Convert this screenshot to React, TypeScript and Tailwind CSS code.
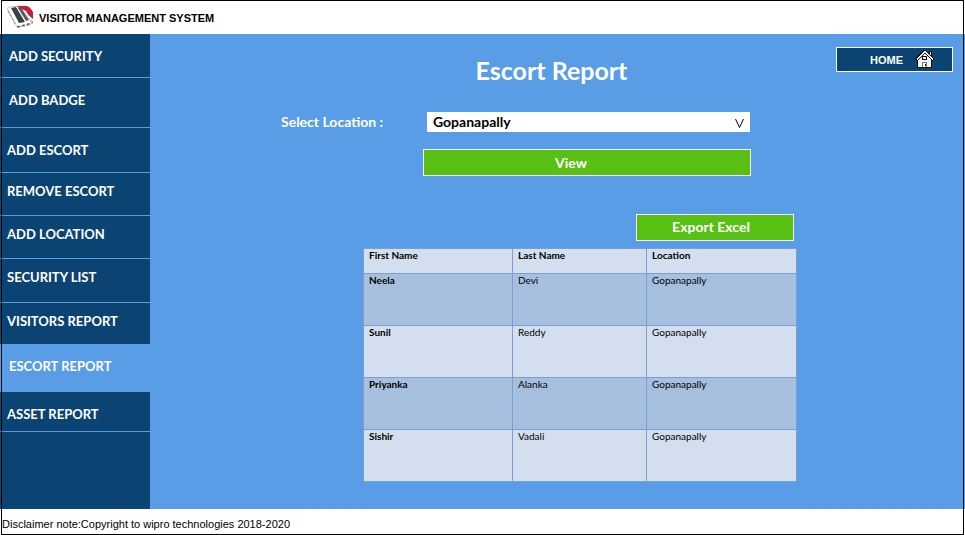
import React from "react";

type NavItem = { label: string; className: string };

const navItems: NavItem[] = [
  { label: "ADD SECURITY", className: "h-11 pt-3 pl-[9px] border-b" },
  { label: "ADD BADGE", className: "h-[50px] pt-3 pl-[9px] border-b" },
  { label: "ADD ESCORT", className: "h-[45px] pt-3 pl-[7px] border-b" },
  { label: "REMOVE ESCORT", className: "h-[43px] pt-2 pl-[7px] border-b" },
  { label: "ADD LOCATION", className: "h-[43px] pt-2 pl-[7px] border-b" },
  { label: "SECURITY LIST", className: "h-11 pt-2 pl-[7px] border-b" },
  { label: "VISITORS REPORT", className: "h-[41px] pt-2 pl-[7px]" },
  { label: "ESCORT REPORT", className: "h-12 pt-3 pl-[9px] bg-[#599de6]" },
  { label: "ASSET REPORT", className: "h-10 pt-3 pl-[7px] border-b" },
];

const escorts = [
  ["Neela", "Devi", "Gopanapally"],
  ["Sunil", "Reddy", "Gopanapally"],
  ["Priyanka", "Alanka", "Gopanapally"],
  ["Sishir", "Vadali", "Gopanapally"],
];

const sans = "font-['Liberation_Sans',Arial,sans-serif]";
const cell = "border border-[#7a9fd0] px-[5px] text-left align-top";

function Logo() {
  return (
    <svg width="28" height="24" viewBox="0 0 28 24" aria-hidden="true">
      <path d="M0.5 4 Q0.5 2 2.5 2 L11 1 Q13 1 14 3 L24 17 Q25 19 23 20 L12 22 Q10 22 9 20 Z" fill="#fff" stroke="#c3c7c8" strokeWidth="1" />
      <path d="M10 1 L20 1 Q23 2 24 4 L26 7 L26 19 L23 13 L19 6 L12 3 Z" fill="#c51f3f" />
      <path d="M20 9 L26 14 L26 17 L23 14 Z" fill="#fff" />
      <path d="M4 3 L9 2 L18 17 L12 18 Z" fill="#3d4142" />
      <path d="M11 3 L14 3 L22 15 L19 16 Z" fill="#555a5b" />
      <path d="M1 6 L9 20" stroke="#858a8b" strokeWidth="1" strokeDasharray="3 1" />
      <path d="M10 22 L25 18" stroke="#555a5b" strokeWidth="1.5" strokeDasharray="3 2" />
    </svg>
  );
}

function HouseIcon() {
  return (
    <svg width="19" height="19" viewBox="0 0 19 19" shapeRendering="crispEdges" aria-hidden="true">
      <path d="M14 1h3v7h-3z" fill="#111" />
      <path d="M15 2h1v5h-1z" fill="#ddd" />
      <path d="M2 9 L9 2 L17 9 V18 H2 Z" fill="#111" />
      <path d="M3 9 L9 3 L16 9 V17 H3 Z" fill="#f4f4f4" />
      <path d="M0 9 L8 0 H11 L19 9 L17 11 L10 4 H9 L2 11 Z" fill="#111" />
      <path d="M1 9 L8 2 L9 1 H10 L18 9 L17 10 L10 3 H9 L2 10 Z" fill="#f4f4f4" />
      <path d="M7 6h5v4h-5z" fill="#111" />
      <path d="M8 7h3v2h-3z" fill="#f4f4f4" />
      <path d="M7 12h5v5h-5z" fill="#777" />
      <path d="M8 13h3v4h-3z" fill="#fff" />
      <path d="M10 14h1v2h-1z" fill="#111" />
    </svg>
  );
}

export default function App() {
  return (
    <div className="relative flex min-h-screen flex-col bg-white font-['Lato',Calibri,sans-serif]">
      <header className="flex h-[34px] items-center gap-1 pl-[7px]">
        <Logo />
        <span className={`${sans} pt-0.5 text-[11px] font-bold text-black`}>VISITOR MANAGEMENT SYSTEM</span>
      </header>

      <div className="flex flex-1">
        <nav className="w-[150px] shrink-0 bg-[#0b4472]">
          {navItems.map((item) => (
            <a
              key={item.label}
              href="#"
              className={`block border-[#599de6] text-[13px] leading-5 font-bold whitespace-nowrap text-white ${item.className}`}
            >
              {item.label}
            </a>
          ))}
        </nav>

        <main className="flex-1 bg-[#599de6] pt-[13px] pr-3 pb-6">
          <div className="grid grid-cols-[1fr_auto_1fr] items-start">
            <h1 className="col-start-2 pt-[7px] text-[25px] leading-8 font-bold text-white">Escort Report</h1>
            <button
              className={`${sans} flex h-[25px] w-[117px] items-center justify-end gap-3 justify-self-end border border-white bg-[#0b4472] pr-[18px] text-[11px] font-bold text-white`}
            >
              <span className="pt-0.5">HOME</span>
              <HouseIcon />
            </button>
          </div>

          <div className="mx-auto max-w-[541px] pt-[26px]">
            <form className="w-[470px]" onSubmit={(e) => e.preventDefault()}>
              <div className="flex items-center">
                <label htmlFor="location" className="w-[146px] text-sm leading-5 font-bold text-white">
                  Select Location :
                </label>
                <div className="relative mr-px flex-1">
                  <select
                    id="location"
                    className="block h-5 w-full appearance-none bg-white pl-1.5 text-sm leading-5 font-bold text-black"
                  >
                    <option>Gopanapally</option>
                  </select>
                  <svg
                    className="pointer-events-none absolute top-[7px] right-1.5"
                    width="9"
                    height="9"
                    viewBox="0 0 9 9"
                    aria-hidden="true"
                  >
                    <path d="M0.5 0 L4.5 8.5 L8.5 0" fill="none" stroke="#000" strokeWidth="1" />
                  </svg>
                </div>
              </div>
              <button
                type="submit"
                className="mt-[17px] ml-[142px] block h-[27px] w-[328px] border border-white bg-[#58c013] pr-8 text-sm font-bold text-white"
              >
                View
              </button>
            </form>

            <div className="mt-[38px] mr-[25px] ml-[82px]">
              <button className="mr-[3px] ml-auto block h-[27px] w-[158px] border border-white bg-[#58c013] pr-2 pb-0.5 text-sm leading-5 font-bold text-white">
                Export Excel
              </button>
              <table className="mt-[7px] w-full table-fixed border-collapse text-[10px] leading-3 text-black">
                <colgroup>
                  <col className="w-[149px]" />
                  <col className="w-[134px]" />
                  <col />
                </colgroup>
                <thead>
                  <tr className="h-[25px] bg-[#d3dfee]">
                    {["First Name", "Last Name", "Location"].map((h) => (
                      <th key={h} scope="col" className={`${cell} font-bold`}>
                        {h}
                      </th>
                    ))}
                  </tr>
                </thead>
                <tbody>
                  {escorts.map(([first, last, location]) => (
                    <tr key={first} className="h-[52px] odd:bg-[#a7bfde] even:bg-[#d3dfee]">
                      <th scope="row" className={`${cell} font-bold`}>
                        {first}
                      </th>
                      <td className={cell}>{last}</td>
                      <td className={cell}>{location}</td>
                    </tr>
                  ))}
                </tbody>
              </table>
            </div>
          </div>
        </main>
      </div>

      <footer className={`${sans} flex h-[26px] items-center pt-1 pl-0.5 text-[11px] text-black`}>
        <span>Disclaimer note:</span>
        <span>Copyright to wipro technologies 2018-2020</span>
      </footer>

      <div className="pointer-events-none absolute inset-x-px inset-y-0 border border-black" />
    </div>
  );
}
